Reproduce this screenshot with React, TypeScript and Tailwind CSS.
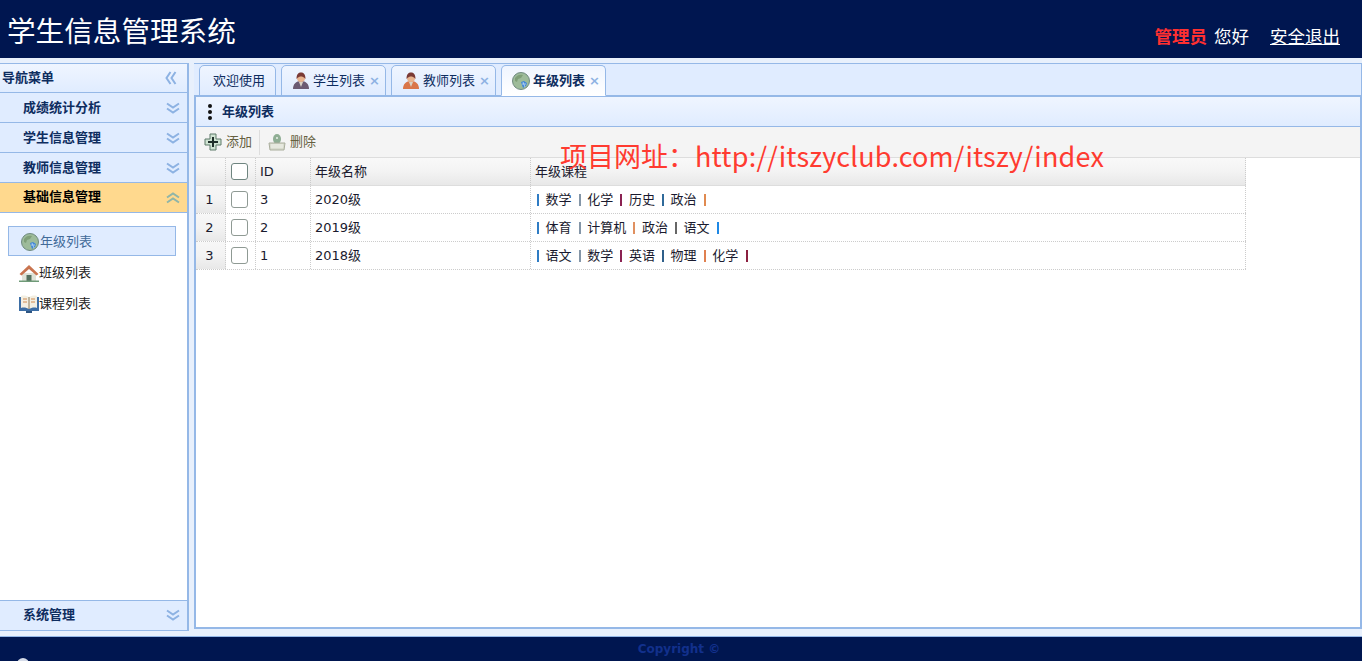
const cjk = 'font-["DejaVu_Sans","Noto_Sans_CJK_SC",sans-serif]';

function Chevrons({ up = false, left = false }: { up?: boolean; left?: boolean }) {
  const rotate = up ? 'rotate-180' : left ? 'rotate-90' : '';
  return (
    <svg viewBox="0 0 14 14" className={`h-[14px] w-[14px] ${rotate}`} fill="none" stroke={up ? '#8fb5a8' : '#8db2e3'} strokeWidth="2">
      <path d="M1 2.500 7 6.500 13 2.500" />
      <path d="M1 7.500 7 11.500 13 7.500" />
    </svg>
  );
}

function Globe({ className = 'h-[18px] w-[18px]' }: { className?: string }) {
  return (
    <svg viewBox="0 0 18 18" className={className}>
      <circle cx="9" cy="9" r="8.5" fill="#9dbb9a" stroke="#6f8a80" />
      <path d="M3 6c2-3 5-4 8-3l-2 3-3 1-1 3-2-1z" fill="#7f9f78" />
      <path d="M9 10l3-1 3 2-1 3-3 2-1-3z" fill="#3f86d8" />
      <path d="M10 12h4M11 10l2 5" stroke="#cfe2f7" strokeWidth="0.7" />
    </svg>
  );
}

function House() {
  return (
    <svg viewBox="0 0 20 18" className="h-[18px] w-[20px]">
      <path d="M3 9h14v8H3z" fill="#dfe3d8" />
      <path d="M0.500 10 10 1l9.500 9-2 1.500L10 5l-7.500 6.500z" fill="#c9744f" />
      <path d="M7.500 11h5v6h-5z" fill="#54705f" />
      <path d="M0 16.500h20V18H0z" fill="#6f9a78" />
    </svg>
  );
}

function Book() {
  return (
    <svg viewBox="0 0 20 18" className="h-[18px] w-[20px]">
      <path d="M0 2h20v14H0z" fill="#3d6ea5" />
      <path d="M2 1c3-1 6 0 8 1 2-1 5-2 8-1v12c-3-1-6 0-8 1-2-1-5-2-8-1z" fill="#f3efe2" />
      <path d="M10 2v12" stroke="#8a7a5a" />
      <path d="M4 4h4M4 7h4M12 4h4M12 7h4" stroke="#d08a50" />
      <path d="M7 16h6v2H7z" fill="#2f5683" />
    </svg>
  );
}

function Person({ robe, hair }: { robe: string; hair: string }) {
  return (
    <svg viewBox="0 0 18 18" className="h-[18px] w-[18px]">
      <path d="M1 17c0-5 3-8 8-8s8 3 8 8z" fill={robe} />
      <path d="M7 10h4l-2 5z" fill="#d9d2c4" />
      <circle cx="9" cy="6" r="4" fill="#e8b48f" />
      <path d="M4.500 7c0-5 2-6.500 4.500-6.500S13.500 2 13.500 7C12 5 10 4.500 9 4.500S6 5 4.500 7z" fill={hair} />
    </svg>
  );
}

function PlusIcon() {
  return (
    <svg viewBox="0 0 18 18" className="h-[18px] w-[18px]">
      <path d="M6 1h6v5h5v6h-5v5H6v-5H1V6h5z" fill="#cfe3d2" stroke="#5f7a6a" />
      <path d="M8 4h2v4h4v2h-4v4H8v-4H4V8h4z" fill="#1f2f2a" />
    </svg>
  );
}

function DeleteIcon() {
  return (
    <svg viewBox="0 0 18 18" className="h-[18px] w-[18px]">
      <ellipse cx="9" cy="6" rx="4" ry="5" fill="#8fae94" />
      <circle cx="9" cy="5" r="1" fill="#e9f0ea" />
      <path d="M1 10h16l-1 7H2z" fill="#d9dccf" stroke="#a9ad9c" />
      <path d="M3 12h12M3 14h12" stroke="#f3f4ee" />
    </svg>
  );
}

function NavHeader({ label, open = false }: { label: string; open?: boolean }) {
  return (
    <div className={`flex h-[30px] shrink-0 items-center justify-between border-b border-[#95b8e7] pl-[23px] pr-[7px] text-[13px] font-bold ${open ? 'bg-[#ffd98e] text-[#000]' : 'bg-[#e0ecff] text-[#0e2d5f]'}`}>
      <span className={open ? '-mt-[2px]' : ''}>{label}</span>
      <Chevrons up={open} />
    </div>
  );
}

function Tab({ label, icon, active = false, closable = true }: { label: string; icon?: React.ReactNode; active?: boolean; closable?: boolean }) {
  return (
    <div className={`-mb-px flex h-[31px] items-center rounded-t-[5px] border border-[#95b8e7] text-[13px] text-[#0e2d5f] ${active ? 'border-b-white bg-gradient-to-b from-[#eff5ff] to-white font-bold' : 'bg-gradient-to-b from-[#eff5ff] to-[#e0ecff]'} ${closable ? 'w-[105px] pl-[10px]' : 'w-[77px] justify-center'}`}>
      {icon}
      <span className="ml-[3px]">{label}</span>
      {closable && <span className="ml-[4px] text-[13px] font-bold leading-none text-[#8db2e3]">×</span>}
    </div>
  );
}

const rows = [
  {
    no: 1, id: 3, name: '2020级',
    courses: ['数学', '化学', '历史', '政治'],
    bars: ['bg-[#2f7cc4]', 'bg-[#8496a8]', 'bg-[#8b2252]', 'bg-[#2f6a9a]', 'bg-[#e08a50]'],
  },
  {
    no: 2, id: 2, name: '2019级',
    courses: ['体育', '计算机', '政治', '语文'],
    bars: ['bg-[#2f7cc4]', 'bg-[#8496a8]', 'bg-[#e09060]', 'bg-[#666666]', 'bg-[#1e88e5]'],
  },
  {
    no: 3, id: 1, name: '2018级',
    courses: ['语文', '数学', '英语', '物理', '化学'],
    bars: ['bg-[#2f7cc4]', 'bg-[#8496a8]', 'bg-[#8b2252]', 'bg-[#2f5f8a]', 'bg-[#e08050]', 'bg-[#8b2040]'],
  },
];

function Checkbox({ header = false }: { header?: boolean }) {
  return <span className={`block h-[17px] w-[17px] rounded-[3px] border bg-white ${header ? 'border-[#6f8580]' : 'border-[#8f9a94]'}`} />;
}

export default function App() {
  return (
    <div className={`relative flex h-[661px] flex-col overflow-hidden bg-[#e8f0fc] ${cjk}`}>
      <header className="flex h-[58px] shrink-0 items-start justify-between bg-[#001650] text-white">
        <h1 className="ml-[7px] mt-[11px] text-[28.6px] font-normal leading-[42px]">学生信息管理系统</h1>
        <div className="mr-[22px] mt-[25px] flex items-center text-[17.500px] leading-[24px]">
          <span className="font-bold text-[#ff3030]">管理员</span>
          <span className="ml-[7px]">您好</span>
          <a className="ml-[21px] underline">安全退出</a>
        </div>
      </header>

      <div className="flex min-h-0 flex-1 pb-[5px] pt-[5px]">
        <aside className="flex h-[568px] w-[189px] shrink-0 flex-col border-b border-r-2 border-t border-[#95b8e7] bg-white">
          <div className="flex h-[29px] shrink-0 items-center justify-between border-b border-[#95b8e7] bg-gradient-to-b from-[#eff5ff] to-[#e0ecff] pl-[2px] pr-[9px] text-[13px] font-bold text-[#0e2d5f]">
            <span>导航菜单</span>
            <Chevrons left />
          </div>
          <NavHeader label="成绩统计分析" />
          <NavHeader label="学生信息管理" />
          <NavHeader label="教师信息管理" />
          <NavHeader label="基础信息管理" open />
          <div className="flex-1 pl-[8px] pr-[11px] pt-[13px] text-[13px]">
            <div className="flex h-[30px] items-center border border-[#95b8e7] bg-[#e0ecff] pl-[12px] pt-[1px] text-[#416a99]">
              <Globe />
              <span className="ml-px mt-[1px]">年级列表</span>
            </div>
            <div className="mt-[1px] flex h-[31px] items-center pl-[11px] text-[#222]">
              <House />
              <span className="mt-[1px]">班级列表</span>
            </div>
            <div className="flex h-[31px] items-center pl-[11px] text-[#222]">
              <Book />
              <span className="mt-[1px]">课程列表</span>
            </div>
          </div>
          <div className="flex h-[30px] shrink-0 items-center justify-between border-t border-[#95b8e7] bg-[#e0ecff] pb-[2px] pl-[23px] pr-[7px] text-[13px] font-bold text-[#0e2d5f]">
            <span>系统管理</span>
            <Chevrons />
          </div>
        </aside>

        <main className="ml-[5px] flex h-[566px] min-w-0 flex-1 flex-col">
          <div className="flex h-[34px] shrink-0 items-end gap-[5px] border-r border-t border-b-2 border-[#95b8e7] bg-[#e0ecff] pl-[5px]">
            <Tab label="欢迎使用" closable={false} />
            <Tab label="学生列表" icon={<Person robe="#6b5a72" hair="#7a3a35" />} />
            <Tab label="教师列表" icon={<Person robe="#d9764a" hair="#7a3a35" />} />
            <Tab label="年级列表" icon={<Globe />} active />
          </div>
          <section className="flex min-h-0 flex-1 flex-col border-x-2 border-b-2 border-[#95b8e7] bg-white">
            <div className="flex h-[30px] shrink-0 items-center border-b border-[#95b8e7] bg-gradient-to-b from-[#eff5ff] to-[#e0ecff] pl-[12px] text-[13px] font-bold text-[#0e2d5f]">
              <span className="flex flex-col gap-[2px]">
                <span className="h-[4px] w-[4px] rounded-full bg-[#111]" />
                <span className="h-[4px] w-[4px] rounded-full bg-[#111]" />
                <span className="h-[4px] w-[4px] rounded-full bg-[#111]" />
              </span>
              <span className="ml-[10px]">年级列表</span>
            </div>
            <div className="flex h-[31px] shrink-0 items-center border-b border-[#dddddd] bg-[#f4f4f4] pl-[8px] text-[13px] text-[#66603f]">
              <PlusIcon />
              <span className="ml-[4px]">添加</span>
              <span className="ml-[7px] h-[25px] w-px bg-[#dddddd]" />
              <span className="ml-[8px]"><DeleteIcon /></span>
              <span className="ml-[4px]">删除</span>
            </div>
            <div className="w-[1050px] text-[13px] text-[#1a1a2e]">
              <div className="grid h-[28px] grid-cols-[30px_30px_55px_220px_1fr] items-center border-b border-[#dddddd] bg-gradient-to-b from-[#f9f9f9] via-[#f3f3f3] to-[#e8e8e8]">
                <span className="h-full border-r border-dotted border-[#cccccc]" />
                <span className="flex h-full items-center justify-center border-r border-dotted border-[#cccccc] pr-[2px]"><Checkbox header /></span>
                <span className="flex h-full items-center border-r border-dotted border-[#cccccc] pl-[4px] pt-[1px]">ID</span>
                <span className="flex h-full items-center border-r border-dotted border-[#cccccc] pl-[4px] pt-[1px]">年级名称</span>
                <span className="flex h-full items-center border-r border-dotted border-[#cccccc] pl-[4px] pt-[1px]">年级课程</span>
              </div>
              {rows.map((row) => (
                <div key={row.no} className="grid h-[28px] grid-cols-[30px_30px_55px_220px_1fr] items-center border-b border-dotted border-[#cccccc]">
                  <span className="flex h-full items-center justify-center border-r border-dotted border-[#cccccc] bg-gradient-to-b from-[#f7f7f7] via-[#f3f3f3] to-[#e8e8e8] pr-[2px]">{row.no}</span>
                  <span className="flex h-full items-center justify-center border-r border-dotted border-[#cccccc] pr-[2px]"><Checkbox /></span>
                  <span className="flex h-full items-center border-r border-dotted border-[#cccccc] pl-[4px]">{row.id}</span>
                  <span className="flex h-full items-center border-r border-dotted border-[#cccccc] pl-[4px]">{row.name}</span>
                  <span className="flex h-full items-center border-r border-dotted border-[#cccccc] pl-[6px]">
                    {row.courses.map((course, i) => (
                      <span key={course} className="flex items-center">
                        <span className={`mr-[6.5px] h-[12px] w-[2px] ${i > 0 ? 'ml-[7.2px]' : ''} ${row.bars[i]}`} />
                        {course}
                      </span>
                    ))}
                    <span className={`ml-[7.2px] h-[12px] w-[2px] ${row.bars[row.courses.length]}`} />
                  </span>
                </div>
              ))}
            </div>
          </section>
        </main>
      </div>

      <footer className="relative flex h-[25px] shrink-0 items-center justify-center overflow-hidden border-t border-[#95b8e7] bg-[#001650] pr-[4px] text-[12px] font-bold text-[#12308c]">
        Copyright ©
        <span className="absolute left-[17px] top-[21px] h-[6px] w-[12px] rounded-t-full bg-[#d5dbe8]" />
      </footer>

      <div className="absolute left-[560px] top-[137px] font-['Noto_Sans_CJK_SC',sans-serif] text-[27px] leading-[38px] text-[#ff3b30]">
        项目网址：<span className="tracking-[0.2px]">http://itszyclub.com/itszy/index</span>
      </div>
    </div>
  );
}
